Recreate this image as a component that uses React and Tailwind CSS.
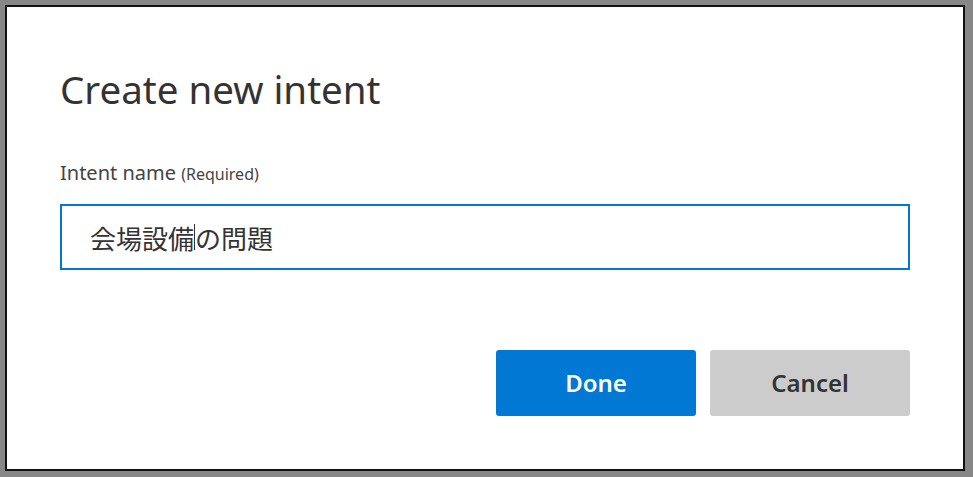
export default function App() {
  return (
    <div className="w-[973px] h-[477px] bg-[#878787] pt-[5px] pl-[5px]" style={{ fontFamily: '"Noto Sans", "Noto Sans CJK JP", sans-serif' }}>
      <div className="w-[960px] h-[466px] border-2 border-[#111] bg-white px-[53px] flex flex-col">
        <h1 className="mt-[59px] text-[38.5px] leading-[46px] text-[#333]">Create new intent</h1>
        <div className="mt-[48px] text-[20px] leading-[26px] text-[#444]">
          Intent name <span className="text-[16px]">(Required)</span>
        </div>
        <div className="mt-[17px] h-[66px] border-2 border-[#0078d4] flex items-center pl-[28px] text-[26px] text-[#333]" style={{ fontFamily: '"Noto Sans CJK JP", sans-serif' }}>
          <span>会場設備</span>
          <span className="inline-block w-px h-[26px] bg-[#333]"></span>
          <span>の問題</span>
        </div>
        <div className="mt-[80px] flex justify-end gap-[14px]">
          <button className="w-[200px] h-[66px] rounded-[3px] bg-[#0078d4] text-white text-[24px] font-semibold">Done</button>
          <button className="w-[200px] h-[66px] rounded-[3px] bg-[#cccccc] text-[#333] text-[24px] font-semibold">Cancel</button>
        </div>
      </div>
    </div>
  );
}
